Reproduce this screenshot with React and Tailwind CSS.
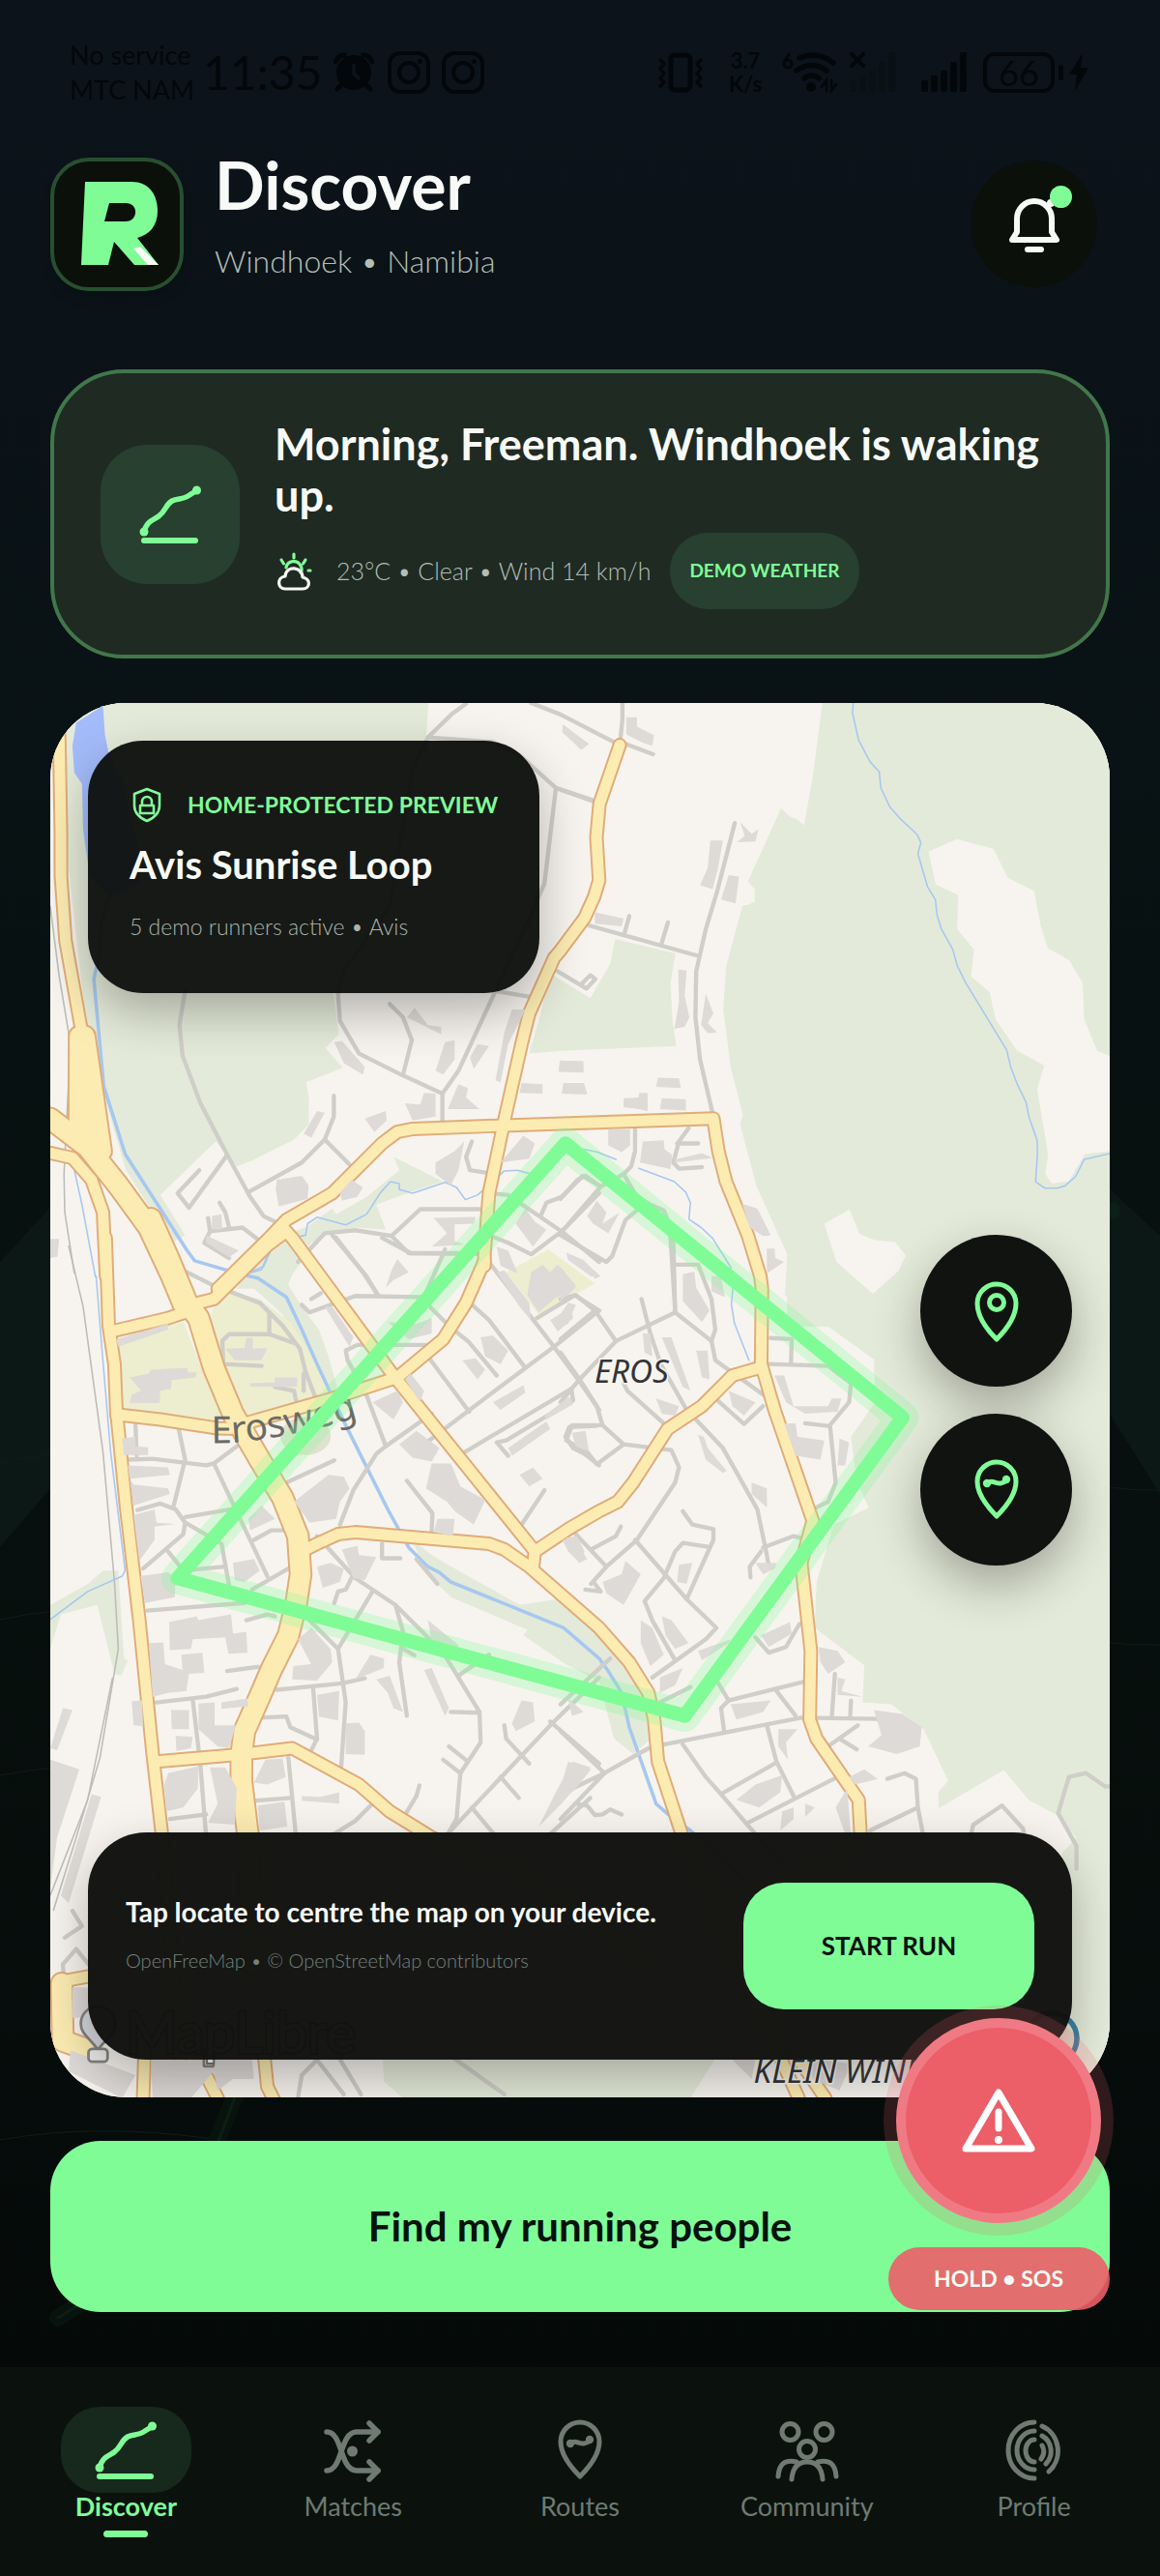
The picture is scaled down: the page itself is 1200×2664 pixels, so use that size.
const tabs = [
  { label: "Discover", icon: RouteLineIcon, active: true },
  { label: "Matches", icon: MatchesIcon },
  { label: "Routes", icon: RoutePinIcon },
  { label: "Community", icon: CommunityIcon },
  { label: "Profile", icon: ProfileIcon },
];

/* ---------- ICONS ---------- */

function RouteLineIcon() {
  return (
    <svg viewBox="0 0 64 64" className="size-16" fill="none" stroke="currentColor" strokeWidth="5.5" strokeLinecap="round">
      <path d="M5 50C8 38 15 38 20 34C28 28 27 22 34 18C40 15 46 17 52 12L60 7" />
      <path d="M5 59H58" strokeWidth="6" />
      <circle cx="5" cy="50" r="4.5" fill="currentColor" stroke="none" />
      <circle cx="59.5" cy="7" r="4.5" fill="currentColor" stroke="none" />
    </svg>
  );
}

function MatchesIcon() {
  return (
    <svg viewBox="0 0 64 64" className="size-16 overflow-visible" fill="none" stroke="currentColor" strokeWidth="5.5" strokeLinecap="round" strokeLinejoin="round">
      <path d="M5 13C22 13 18 53 36 53H58" />
      <path d="M5 53C22 53 18 13 36 13H58" />
      <path d="M49 4L58 13L49 22M49 44L58 53L49 62" />
      <circle cx="31.5" cy="33" r="5.5" fill="currentColor" stroke="none" />
    </svg>
  );
}

function RoutePinIcon() {
  return (
    <svg viewBox="0 0 64 64" className="size-16" fill="none" stroke="currentColor" strokeWidth="5" strokeLinecap="round" strokeLinejoin="round">
      <path d="M32 59C21 48 12 35 12 23A20 20 0 0 1 52 23C52 35 43 48 32 59Z" />
      <path d="M22 25C28 19 34 30 42 22" />
      <circle cx="22" cy="25" r="4.2" fill="currentColor" stroke="none" />
      <circle cx="42" cy="21" r="4.2" fill="currentColor" stroke="none" />
    </svg>
  );
}

function LocateIcon() {
  return (
    <svg viewBox="0 0 64 64" className="size-16" fill="none" stroke="currentColor" strokeWidth="5" strokeLinecap="round" strokeLinejoin="round">
      <path d="M32 61C21 50 12 37 12 24A20 20 0 0 1 52 24C52 37 43 50 32 61Z" />
      <circle cx="32" cy="23" r="7.5" />
    </svg>
  );
}

function CommunityIcon() {
  return (
    <svg viewBox="0 0 64 64" className="size-16 overflow-visible" fill="none" stroke="currentColor" strokeWidth="5" strokeLinecap="round">
      <circle cx="14.5" cy="13" r="8.5" />
      <circle cx="49.5" cy="13" r="8.5" />
      <circle cx="32" cy="31" r="8.5" />
      <path d="M16 62C17 50 22 44 32 44C42 44 47 50 48 62" />
      <path d="M2 59C3 46 9 41 21 44M62 59C61 46 55 41 43 44" />
    </svg>
  );
}

function ProfileIcon() {
  return (
    <svg viewBox="0 0 64 64" className="size-16" fill="none" stroke="currentColor" strokeWidth="5" strokeLinecap="round">
      <path d="M32 3A27 29 0 0 0 32 61M32 12A18 20 0 0 0 32 52M32 21A9 11.5 0 0 0 32 44" />
      <path d="M40 7A27 28 0 0 1 47 54M40 17A17 18 0 0 1 44 46M40 27Q44 34 39 41" />
    </svg>
  );
}

function WeatherIcon() {
  return (
    <svg viewBox="0 0 40 40" className="size-10 shrink-0" fill="none" strokeWidth="3.2" strokeLinecap="round" strokeLinejoin="round">
      <path d="M12 16A8 8 0 0 1 27 14C28.500 17 28 20 27 21M20 2V6M7 8L9.500 12M32 8L29.500 12M35 19H37" stroke="#80fc97" />
      <path d="M11 38H29C37 38 38 28 29 26C29 15 12 13 11 25C2 26 3 38 11 38Z" stroke="#f7faf6" />
    </svg>
  );
}

function ShieldLockIcon() {
  return (
    <svg viewBox="0 0 36 40" className="h-10 w-9 shrink-0 text-[#80fc97]" fill="none" stroke="currentColor" strokeWidth="2.600" strokeLinejoin="round">
      <path d="M18 4L31 9V21C31 29 25 34 18 37C11 34 5 29 5 21V9Z" />
      <path d="M11 21H25V29H11ZM13 21V17A5 5 0 0 1 23 17V21" />
    </svg>
  );
}

function BellIcon() {
  return (
    <svg viewBox="0 0 60 64" className="h-16 w-15" fill="none" stroke="#f7faf6" strokeWidth="6" strokeLinecap="round" strokeLinejoin="round">
      <path d="M12 40V26A18 18 0 0 1 48 26V40L53 48H7Z" />
      <path d="M23 58H37" />
      <circle cx="47" cy="10" r="4" fill="#f7faf6" stroke="none" />
    </svg>
  );
}

function AlertIcon() {
  return (
    <svg viewBox="0 0 80 72" className="h-18 w-20" fill="none" stroke="white" strokeWidth="7" strokeLinecap="round" strokeLinejoin="round">
      <path d="M40 7L74 65H6Z" />
      <path d="M40 27V44" />
      <circle cx="40" cy="56" r="4" fill="white" stroke="none" />
    </svg>
  );
}

function Logo() {
  return (
    <div className="mt-[7px] size-[138px] shrink-0 rounded-[40px] border-4 border-[#284f2f] bg-[#0b100b] shadow-lg">
      <svg viewBox="4 4 130 130" className="size-full" role="img" aria-label="Logo">
        <path
          fillRule="evenodd"
          fill="#80fc97"
          d="M36 25H84C102 25 111 38 111 55C111 71 102 80 90 83L112 111H87L66 87L60 111H32ZM61 47L56 66H78C91 66 92 47 78 47Z"
        />
        <path d="M86 94L93 92L112 111H101Z" fill="#f7faf6" />
      </svg>
    </div>
  );
}

/* ---------- STATUS BAR ---------- */

function GramIcon() {
  return (
    <svg viewBox="0 0 44 44" className="size-11" fill="none" stroke="currentColor" strokeWidth="4">
      <rect x="2" y="2" width="40" height="40" rx="11" />
      <circle cx="22" cy="22" r="10" />
      <circle cx="33.500" cy="10.500" r="2.500" fill="currentColor" stroke="none" />
    </svg>
  );
}

function SignalBars({ className }) {
  return (
    <svg viewBox="0 0 48 42" className={className} fill="currentColor">
      <rect x="0" y="29" width="7" height="12" rx="2" />
      <rect x="10" y="24" width="7" height="17" rx="2" />
      <rect x="20" y="19" width="7" height="22" rx="2" />
      <rect x="30" y="10" width="7" height="31" rx="2" />
      <rect x="40" y="0" width="7" height="41" rx="2" />
    </svg>
  );
}

function StatusBar() {
  return (
    <div className="flex h-[150px] items-center justify-between pr-[74px] pl-[72px] text-[#03070a]">
      <div className="flex items-center">
        <div className="w-[134px] text-[27px] leading-9 whitespace-nowrap">
          <p>No service</p>
          <p>MTC NAM</p>
        </div>
        <p className="mr-3 ml-1 text-[48px] leading-none">11:35</p>
        <svg viewBox="0 0 42 42" className="size-[42px]">
          <circle cx="21" cy="21" r="18" fill="currentColor" />
          <path d="M2 10Q5 3 11 3M40 10Q37 3 31 3M7 35L4 38M35 35L38 38" stroke="currentColor" strokeWidth="5" strokeLinecap="round" fill="none" />
          <path d="M21 12V22L27 28" stroke="#0b131a" strokeWidth="3.500" fill="none" />
        </svg>
        <div className="ml-3.5 flex gap-3">
          <GramIcon />
          <GramIcon />
        </div>
      </div>

      <div className="flex items-center">
        <svg viewBox="0 0 50 42" className="mr-5 h-[42px] w-[50px]" fill="none" stroke="currentColor" strokeWidth="5" strokeLinejoin="round" strokeLinecap="round">
          <rect x="15" y="3" width="20" height="36" rx="4" />
          <path d="M4 8L8 12L4 17L8 22L4 27L8 31L4 35M46 8L42 12L46 17L42 22L46 27L42 31L46 35" strokeWidth="3.500" />
        </svg>
        <div className="mr-4 w-11 text-center text-[22px] leading-6 font-bold">
          <p>3.7</p>
          <p>K/s</p>
        </div>
        <svg viewBox="0 0 58 42" className="mr-3 h-[42px] w-[58px]" fill="none" stroke="currentColor" strokeWidth="5.500" strokeLinecap="round">
          <path d="M18 6Q36 -2 53 11M15 19Q31 8 46 19M23 27Q31 21 38 27" />
          <circle cx="30" cy="36" r="5" fill="currentColor" stroke="none" />
          <path d="M41 36L46 29V40M56 33L51 40V29" strokeWidth="2.500" />
          <path d="M7 2L3 9" strokeWidth="3" />
          <circle cx="6" cy="12" r="4" strokeWidth="3" />
        </svg>
        <div className="relative mr-[26px]">
          <SignalBars className="h-[42px] w-12 text-[#0a1115]" />
          <svg viewBox="0 0 16 16" className="absolute top-0 left-0 size-4" stroke="currentColor" strokeWidth="4" strokeLinecap="round">
            <path d="M2 2L14 14M14 2L2 14" />
          </svg>
        </div>
        <SignalBars className="mr-4 h-[42px] w-12" />
        <div className="flex h-[42px] w-[74px] items-center justify-center rounded-xl border-4 border-current text-[36px] leading-none">
          66
        </div>
        <div className="ml-1 h-4 w-[5px] rounded bg-current" />
        <svg viewBox="0 0 20 40" className="ml-1.5 h-10 w-5" fill="currentColor">
          <path d="M14 0L0 22H8L6 39L20 15H12Z" />
        </svg>
      </div>
    </div>
  );
}

/* ---------- MAP ---------- */

// Geometry is kept per tile; dx/dy place the tile on the sheet.
const tiles = [
  {
    id: "nw",
    dx: 0,
    dy: 0,
    parks: [
      "168,68 1122,68 1115,160 900,500 873,828 887,935 852,970 898,1022 801,1060 809,1100 808,1170 770,1210 660,1265 620,1280 565,1215 420,1355 485,1460 450,1480 330,1290 230,950 180,500",
      "1440,775 1545,840 1597,750 1610,685 1768,723 1755,800 1760,900 1770,965 1467,978 1385,985 1410,900",
      "1030,1255 1160,1320 1080,1345 985,1380 1010,1445 930,1440 850,1455 790,1500 750,1600 620,1600 700,1470 800,1440 870,1390 850,1360 880,1405 960,1360 1045,1290",
    ],
    lakes: ["200,120 270,75 275,150 285,200 320,280 360,440 365,540 290,575 235,520 218,400 215,280 195,250 190,180"],
    rivers: ["290,570 265,640 262,720 246,790 272,1070 328,1248 490,1500 510,1527 630,1562 675,1572"],
    streams: [
      "1390,1300 1355,1290 1320,1292 1250,1355 1218,1367 1195,1335 1165,1322 1080,1350 1045,1340 1045,1325 1022,1320 995,1350 960,1405 905,1433 830,1413 805,1430 800,1460 730,1475 705,1500 685,1550 640,1563",
      "195,1290 215,1380 250,1568",
    ],
    rails: ["132,600 155,780 185,960 168,1300 170,1400 195,1560"],
    minor: [
      "1220,70 1185,95 1120,158 1080,240 1020,600 900,770 885,830 890,900 940,985 1050,1040 1158,1090 1158,1165",
      "1120,158 1290,170 1360,205 1455,290 1560,325",
      "1390,68 1467,98 1610,172",
      "1455,290 1425,540 1390,620 1200,1030 1158,1090",
      "1300,822 1395,838",
      "1020,855 1055,890 1078,950 1055,1040",
      "485,820 470,910 478,990 525,1115 595,1250 655,1360 690,1410 720,1425",
      "655,1345 790,1270 850,1210 874,1150 874,1095",
      "850,1210 915,1275",
      "595,1250 495,1388 465,1350 522,1290",
      "545,1415 550,1450 635,1440 700,1490",
      "550,1450 535,1480 600,1520",
      "575,1375 590,1400 600,1440",
      "1235,1215 1220,1255 1230,1290 1270,1296",
      "870,1460 960,1568 990,1620",
      "780,1530 850,1455 930,1447 1025,1462 1100,1392 1255,1392",
      "1025,1462 1070,1507 1255,1507",
      "1280,1350 1330,1355 1470,1450 1568,1530",
      "1415,1410 1430,1375 1470,1360 1525,1305 1568,1330",
      "1568,1350 1470,1450 1390,1510 1330,1480 1285,1462",
      "1520,805 1545,780 1558,790 1535,815 1460,770",
    ],
    major: [
      "155,130 160,410 160,520 172,690 213,920",
      "132,1245 190,1258 240,1315 270,1400 278,1568",
      "570,1600 700,1472 750,1420 870,1350 1000,1220 1040,1190 1080,1182 1320,1173 1867,1155 1880,1240 1900,1320 1957,1460 1990,1568 1994,1600 1992,1797 2027,1917 2127,2207 2097,2317 2122,2547 2119,2727 2137,2777 2247,2937 2253,3047 2147,3107 1867,3217",
      "1622,178 1569,332 1561,420 1568,532 1555,575 1530,630 1467,715 1450,735 1385,880 1365,960 1320,1160 1280,1350 1268,1510 1268,1540",
    ],
    highway: ["209,940 208,1200", "222,940 265,1240", "132,1155 230,1230 310,1330 390,1440 450,1568 480,1640"],
    blocks: [
      "725,1315 790,1305 808,1330 805,1365 730,1385 722,1340",
      "890,1350 920,1315 950,1335 935,1360 895,1370",
      "955,1155 1010,1135 1012,1160 980,1190",
      "1060,1115 1100,1118 1110,1088 1140,1090 1140,1150 1080,1160",
      "1172,1130 1200,1065 1225,1075 1220,1100 1255,1130",
      "795,1195 830,1135 850,1140 815,1205",
      "555,1410 580,1405 582,1445 555,1445",
      "1140,1270 1190,1240 1215,1215 1200,1290 1180,1330 1140,1300",
      "875,955 895,952 955,1020 950,1040 900,1010",
      "1065,890 1085,865 1120,910 1155,915 1155,935",
      "1165,955 1190,950 1190,1000 1160,1040 1140,1030",
      "1250,960 1280,965 1240,1025 1230,995",
      "1340,870 1375,870 1330,960 1310,1060 1297,1055 1320,930",
      "1465,1003 1525,1005 1527,1032 1462,1032",
      "1475,1062 1530,1065 1535,1092 1470,1090",
      "1365,1062 1420,1065 1420,1090 1360,1088",
      "1475,125 1540,175 1520,190 1475,145",
      "1135,1415 1245,1412 1240,1430 1190,1432 1190,1475 1215,1485 1130,1490 1170,1455",
      "540,1460 625,1500 600,1518 540,1480",
      "132,1470 155,1470 150,1515 132,1520",
      "1310,1270 1370,1200 1400,1220 1385,1260",
      "1350,1430 1375,1390 1400,1425 1430,1445 1395,1490",
      "1300,1490 1330,1500 1355,1560 1310,1540",
    ],
  },
  {
    id: "ne",
    dx: 1467,
    dy: 0,
    parks: [
      "685,68 1440,68 1440,1700 593,1700 593,1510 512,1330 470,1170 477,1145 445,1020 426,870 433,758 476,598 490,596 508,588 508,555 490,535 577,343 600,365 620,372 637,388 660,260",
    ],
    clearings: [
      "963,457 1037,424 1133,450 1170,525 1239,560 1256,650 1275,710 1330,740 1366,800 1370,895 1404,978 1440,993 1440,1240 1372,1248 1330,1318 1285,1325 1268,1300 1276,1250 1247,1078 1266,1016 1195,978 1138,895 1123,825 1074,783 1082,712 1038,660 1040,570 982,543",
      "690,1430 756,1393 783,1458 822,1473 876,1478 903,1513 885,1553 817,1613 722,1530",
    ],
    streams: [
      "60,1235 95,1242 145,1262",
      "205,1285 298,1320 328,1348 340,1375 336,1418 368,1440 398,1468 445,1543 452,1590 447,1640 455,1690 493,1787",
      "766,68 764,95 780,165 810,222 834,248 838,290 862,340 890,372 933,412 943,433 935,462 960,548 981,583 985,622 996,658 1026,712 1038,755 1060,800 1167,975 1178,1020 1195,1065 1218,1112 1226,1152 1247,1212 1248,1245 1243,1320 1267,1337 1300,1337 1320,1331 1348,1306 1370,1262 1440,1246",
    ],
    minor: [
      "162,60 162,110 156,170 242,202",
      "0,295 100,330",
      "456,382 410,560 380,660 355,770 353,890 365,1000 400,1150",
      "75,650 362,730",
      "180,625 168,668",
      "281,642 265,695",
      "195,1180 195,1240 185,1280 165,1300 105,1333 65,1305",
      "360,1220 305,1220",
      "335,1180 310,1215 295,1270 310,1286 370,1282",
      "65,1305 45,1315 0,1365",
      "105,1333 0,1455",
      "165,1300 200,1360 240,1382 270,1395 285,1430 290,1500 300,1660",
      "0,1460 120,1530 135,1515 170,1420 200,1395",
    ],
    blocks: [
      "172,105 200,105 200,130 245,152 240,180 215,172 172,150",
      "392,428 425,428 412,500 398,555 365,545 385,500",
      "470,380 500,410 518,398 510,430 462,432 482,415",
      "440,518 467,522 458,592 420,582",
      "90,615 165,632 160,652 90,645",
      "308,765 330,768 325,835 337,890 325,915 298,920 310,850",
      "380,828 400,880 385,905 410,930 385,932 368,910",
      "0,1005 60,1005 60,1035 0,1033",
      "8,1062 60,1062 70,1090 5,1090",
      "255,1048 310,1050 315,1075 250,1072",
      "165,1102 205,1100 205,1088 228,1088 228,1135 205,1130 165,1125",
      "265,1102 328,1104 328,1134 260,1130",
      "125,1183 182,1183 182,1225 160,1243 125,1225",
      "215,1215 270,1212 272,1235 292,1250 288,1287 208,1270",
      "300,1262 370,1245 398,1258 300,1270",
      "95,1370 120,1400 110,1430 155,1400 125,1455 85,1430 70,1410",
      "475,1378 515,1390 550,1460 530,1462 495,1440",
      "540,1495 560,1495 562,1520 585,1530 540,1560",
      "5,125 75,175 55,190 5,145",
      "15,1505 60,1525 100,1568 80,1568 20,1525",
    ],
  },
  {
    id: "sw",
    dx: 0,
    dy: 1467,
    parks: [
      "780,0 815,30 750,115 790,180 835,240 860,310 885,400 850,440 780,300 740,200 640,110 610,90 700,30",
      "1080,790 1130,830 1200,870 1360,960 1460,945 1568,1040 1680,1130 1700,1180 1717,1300 1657,1350 1607,1310 1568,1160 1480,1115 1370,1040 1380,1025 1180,940 1110,870",
      "132,960 230,905 270,870 310,870 325,1100 335,1105 318,1145 300,1140 255,960 160,985 132,1075",
      "1000,2100 1005,2207 1055,2250 1807,2250 1872,2147 1872,2100",
    ],
    campuses: [
      "560,180 600,140 680,160 760,220 830,330 880,420 740,440 640,470 600,380 545,220",
      "305,265 480,220 545,380 580,460 560,480 318,450",
      "1325,90 1435,30 1557,120 1410,200",
    ],
    rivers: [
      "675,105 750,155 790,240 830,330 905,490 965,610 1015,710 1070,810 1120,860 1150,875 1180,900 1475,1020 1568,1100 1590,1130 1627,1190 1647,1280 1682,1380 1717,1480 1757,1515 1807,1550 1950,1680",
    ],
    streams: ["252,100 268,300 290,560 328,870 320,885 230,925 132,998", "740,5 715,20 690,75 635,98"],
    rails: ["180,20 218,180 270,560 300,900 310,1075 262,1360 200,1568 140,1760", "295,1150 230,1470 132,1720"],
    minor: [
      "480,85 560,125 680,170 740,230 785,290 800,350 825,415",
      "685,335 585,330 582,270 600,252 705,252 705,195",
      "705,252 770,275",
      "795,400 795,355",
      "720,390 770,400 778,440",
      "355,490 358,570",
      "340,580 400,578 540,595 560,590 620,545",
      "468,500 485,580 455,700",
      "560,590 700,885",
      "360,712 420,695 460,710 485,745 580,800 600,910",
      "485,745 480,775 375,865",
      "485,730 605,710",
      "440,820 480,870 590,860",
      "665,790 710,765 740,765",
      "660,920 755,865",
      "385,975 640,955",
      "645,1000 700,985 720,990",
      "595,1133 675,1122",
      "410,1215 540,1200 620,1180",
      "505,1210 525,1380 540,1568",
      "445,1520 540,1508",
      "725,1182 895,1165 955,1152",
      "820,1180 830,1310 800,1370",
      "680,1255 750,1252 760,1280 830,1312",
      "755,1360 775,1568",
      "670,1472 760,1465",
      "810,1000 885,1075 905,1215 893,1385",
      "885,1075 975,925",
      "830,780 930,890 1035,960 1160,1085 1255,1240 1258,1320 1205,1400 1195,1520 1160,1580",
      "875,955 885,925 905,920 920,890",
      "1035,960 1055,1030 1045,1110 1065,1250",
      "1055,1075 1085,1092",
      "1200,1145 1280,1090",
      "1180,1240 1255,1242",
      "1175,1330 1225,1370",
      "1160,1365 1205,1400",
      "1060,1510 1090,1460 1098,1432",
      "860,1568 930,1525 970,1485",
      "880,0 950,90 990,150",
      "815,160 840,145",
      "790,175 810,195 930,152 1100,155 1180,235 1225,270 1300,360",
      "910,320 905,295 935,280 1135,280",
      "910,320 955,400 1010,545",
      "890,750 925,660 985,565 1010,545 1130,460",
      "750,640 875,582",
      "1065,635 1132,720 1130,765",
      "1365,750 1425,660",
      "1120,310 1228,455",
      "1230,170 1280,215 1375,340",
      "1568,190 1450,285 1315,385 1110,540",
      "1285,70 1450,285 1520,380 1568,450",
      "1405,210 1505,150 1568,190",
      "1200,570 1495,395 1500,425 1325,530 1300,535 1330,570",
      "1000,800 1000,838 1048,838",
      "1090,840 1145,905",
      "1000,0 1075,40 1250,42",
      "1110,155 1165,30",
      "1480,520 1490,495 1560,492",
      "1480,520 1500,550 1530,565 1568,595",
      "1568,1150 1445,1270 1180,1550",
      "1440,1265 1568,1375",
      "1310,1410 1358,1465",
      "1235,1490 1300,1568",
      "1320,1275 1325,1310 1385,1375",
      "1430,1568 1545,1465",
      "780,2250 790,2190 830,2150 900,2240",
      "1180,2140 1320,2240",
      "885,2140 945,2240",
      "170,1960 165,1900 200,1860 232,1900",
      "170,1830 215,1800 190,1760",
    ],
    major: [
      "277,0 285,230 300,330 305,450 330,700 365,1000 400,1350 425,1568 480,2250",
      "520,170 560,160 700,20 740,-10",
      "1268,60 1220,170 1160,265 1040,365 870,420 660,480 620,490",
      "305,462 420,475 570,498 650,500",
      "738,-30 765,0 1030,360 1400,820",
      "790,820 830,800 885,775 930,770 1280,800 1320,815 1385,860 1568,1020 1647,1110 1697,1190 1712,1260 1722,1370 1787,1568 1900,1830 2090,2250",
      "1395,860 1400,820 1490,760 1568,715 1617,690 1657,640 1747,500 1837,440 1877,400 1917,360 1987,340",
      "300,243 440,210 500,190",
      "410,1370 640,1350 765,1335 940,1430 1020,1500 1130,1568 1400,1680 1700,1900",
      "375,2250 380,2100",
      "515,2100 530,2170 570,2250",
      "688,2100 700,2220 720,2260",
      "2077,2130 2160,2250",
      "160,1945 240,1930",
    ],
    highway: [
      "395,-50 440,50 490,170 520,210 560,340 610,460 680,580 740,680 780,780 787,880 775,960 755,1040 710,1130 680,1200 640,1290 632,1350 632,1420 650,1568 660,1900",
      "162,1950 165,2100 220,2120",
    ],
    blocks: [
      "340,365 390,355 395,345 490,340 492,352 515,352 512,365 450,372 448,395 420,400 418,432 340,432 345,410 370,400",
      "305,265 440,225 440,240 310,285",
      "590,290 640,288 645,262 662,262 662,290 700,288 685,320 615,320",
      "655,380 720,378 718,365 778,365 778,390 655,390",
      "320,525 355,520 355,545 388,548 388,568 325,568",
      "335,595 440,600 445,620 340,630 350,645 440,655 445,670 350,700",
      "350,725 405,710 410,745 460,748 405,755 405,790 365,845",
      "368,885 440,875 460,890 458,940 380,955",
      "443,1005 515,990 520,1000 605,985 610,1035 645,1030 648,1085 598,1088 590,1045 505,1050 500,1075 445,1078",
      "390,1060 428,1058 432,1115 478,1130 475,1090 530,1085 535,1138 495,1140 488,1185 440,1190 400,1200",
      "520,1218 562,1215 562,1275 618,1275 600,1335 570,1330 520,1285",
      "580,1215 648,1205 650,1225 580,1232",
      "345,1212 372,1210 375,1277 350,1275",
      "448,1235 495,1235 495,1285 450,1285",
      "460,1302 505,1305 500,1335 462,1342",
      "430,1430 440,1400 520,1382 518,1440 480,1490 435,1500",
      "550,1385 590,1385 620,1440 615,1535 545,1530 570,1480",
      "695,1365 740,1362 748,1410 700,1430 665,1425",
      "675,1485 745,1475 752,1540 680,1550",
      "790,1460 840,1462 888,1450 888,1480 790,1472",
      "905,1270 940,1268 955,1290 955,1352 905,1350",
      "830,1195 888,1185 885,1262 835,1252",
      "780,1050 815,1020 865,1075 870,1110 830,1158 765,1155 768,1120 815,1115",
      "970,1090 1005,1100 1005,1125 930,1155",
      "985,1155 1020,1145 1055,1240 1030,1230 1015,1190",
      "1110,1130 1130,1125 1175,1230 1165,1250 1140,1195",
      "1120,1000 1200,1065 1195,1075 1130,1055",
      "1340,1270 1365,1210 1395,1215 1400,1265 1350,1290",
      "770,690 860,620 900,625 915,655 890,690 880,735 810,745 800,730",
      "655,765 650,735 685,700 720,735",
      "610,850 665,840 680,870 640,900 615,895",
      "895,815 935,805 940,830 985,835 955,895 925,890",
      "830,860 865,850 900,865 890,900 845,915",
      "1115,655 1130,590 1180,590 1205,650 1270,685 1240,750 1190,715 1170,690",
      "1135,770 1145,735 1190,735 1185,780",
      "975,430 1040,400 1055,430 1030,475",
      "1045,540 1090,505 1150,550 1130,585 1080,575",
      "1060,370 1075,355 1110,400 1100,430",
      "1290,430 1370,385 1375,405 1310,450",
      "1330,550 1430,480 1440,500 1340,570",
      "1425,465 1490,415 1500,435 1430,475",
      "1360,620 1395,600 1420,630 1385,650",
      "1390,90 1420,70 1440,90 1460,70 1508,125 1450,160 1410,195 1380,150",
      "1010,130 1025,85 1040,55 1070,90 1030,110",
      "1015,220 1090,225 1130,210 1130,250 1070,265",
      "1258,260 1290,255 1330,295 1310,330 1270,310",
      "1210,320 1245,315 1270,345 1250,370",
      "1440,215 1495,180 1500,210 1460,245",
      "1300,90 1320,85 1385,170 1390,215 1360,180",
      "850,180 870,180 925,260 915,285",
      "132,5 155,5 150,50 132,50",
      "165,1230 190,1235 150,1340 132,1335",
      "132,1365 208,1390 150,1568 132,1700",
      "240,1455 265,1462 180,1740 160,1720",
      "395,2150 660,2150 665,2200 610,2200 570,2230 560,2180 500,2250 400,2250",
      "190,1960 232,1960 232,2040 190,2040",
      "185,2125 355,2190 320,2250 180,2180",
      "1480,785 1510,780 1530,820 1515,850",
      "1460,1440 1500,1370 1545,1385 1470,1480 1410,1540",
    ],
  },
  {
    id: "se",
    dx: 1467,
    dy: 1467,
    parks: [
      "593,50 587,150 820,318 823,430 760,520 775,640 807,705 715,750 670,900 665,1020 795,1118 790,1215 865,1220 950,1285 1014,1420 988,1450 990,1492 1160,1392 1225,1470 1300,1510 1350,1568 1310,1611 1337,1680 1337,2260 1440,2260 1440,50",
    ],
    minor: [
      "212,160 235,250 262,330 330,450 425,550 515,710 540,830 545,860",
      "0,265 90,190 145,270 300,195 395,270 405,320 530,410",
      "0,160 40,150 90,190",
      "145,270 50,370 0,430",
      "0,300 50,370 95,440 110,490 165,540 290,555 310,600 300,640 200,790 120,860 80,905",
      "110,490 30,490 15,530 70,560 95,592 165,540",
      "165,380 175,400 270,485",
      "405,420 480,487 530,440",
      "295,0 300,195",
      "300,70 360,70 395,160 405,240 395,270",
      "545,330 700,335 760,380 755,430 705,490 720,640 700,690 660,710",
      "550,262 605,265 603,330",
      "640,485 700,492",
      "320,715 345,750 400,762 400,790 330,945",
      "385,808 320,798 300,820 270,890 220,950 240,1000 300,1105",
      "195,790 330,945 408,1020 380,1050 240,1150",
      "35,770 120,860",
      "80,815 145,780 158,755",
      "530,810 610,780 630,785",
      "525,820 495,860 497,888",
      "510,1045 545,1085 590,1070 625,1010",
      "410,1160 440,1210 640,1160",
      "440,1210 420,1230 428,1290",
      "565,1185 615,1250",
      "0,1455 115,1400 230,1335 270,1325 630,1255 830,1258 880,1315 930,1308",
      "710,1250 718,1140",
      "760,1210 758,1250",
      "540,1275 565,1370 610,1460",
      "320,1325 380,1410 420,1455 580,1640",
      "420,1455 560,1375",
      "490,1530 715,1415",
      "700,1330 778,1275",
      "730,1310 775,1338",
      "855,1415 900,1400 930,1415 935,1490 950,1568",
      "810,1550 935,1490",
      "115,1400 0,1290",
      "115,1400 0,1520",
      "1440,1435 1425,1435 1375,1400 1330,1410 1302,1505 1350,1590 1350,1650",
      "1072,1568 1080,1535 1155,1485 1210,1545 1215,1568",
      "0,1220 130,1100",
      "250,1220 340,1175",
      "40,1480 70,1485 90,1510 110,1508 130,1495 160,1508",
      "65,920 105,925 90,905",
    ],
    blocks: [
      "0,75 40,130 0,165",
      "0,200 20,170 40,175 20,225 0,235",
      "320,95 350,88 355,130 390,190 370,220 320,165",
      "395,100 420,100 430,155 395,140",
      "215,250 235,250 240,310 220,300",
      "265,260 290,260 340,400 320,390",
      "355,295 385,295 390,370 370,365",
      "250,420 310,440 300,465 265,460",
      "440,400 510,430 480,465 450,440",
      "560,360 585,360 610,440 700,440 710,420 735,420 725,455 640,460 590,430",
      "585,485 615,485 620,520 690,530 680,580 615,570",
      "730,525 755,535 745,595 725,595",
      "30,510 65,505 75,560 40,545",
      "360,515 375,520 385,550 435,610 425,615 380,580",
      "500,640 540,655 540,705 500,670",
      "5,790 35,785 70,840 50,850 20,820",
      "110,900 160,880 170,845 210,880 165,960 120,930",
      "310,855 345,850 330,905 305,900",
      "210,1000 240,1020 270,1090 235,1120 210,1060",
      "265,990 290,1000 335,1060 300,1075 275,1040",
      "260,1150 320,1125 300,1170 260,1190",
      "360,1080 445,1050 440,1060 370,1105",
      "525,1040 600,1005 605,1035 545,1070",
      "675,1070 725,1080 745,1110 700,1140 680,1110",
      "725,1150 745,1155 735,1185 790,1200 725,1195",
      "445,1220 550,1210 530,1240 460,1260",
      "570,1285 620,1285 590,1320 595,1365 570,1330",
      "820,1235 895,1245 945,1280 940,1330 880,1350 805,1330 840,1300",
      "510,1430 580,1405 575,1450 520,1490 460,1470",
      "755,1410 795,1390 830,1415 770,1430",
      "580,1500 610,1490 610,1520 575,1550",
      "640,1480 665,1490 640,1515",
      "20,1370 80,1390 40,1440 0,1480 0,1440",
      "60,60 105,100 90,108",
      "510,850 565,850 560,865 530,880",
      "20,1205 60,1240 30,1250",
      "720,1490 750,1440 760,1568 745,1560",
      "640,2145 760,2160 730,2230 660,2200",
      "440,2140 510,2150 500,2200",
    ],
  },
];

function MapLayer({ name, shape: Shape = "polyline", ...style }) {
  return (
    <g {...style}>
      {tiles.map((tile) => (
        <g key={tile.id} transform={`translate(${tile.dx} ${tile.dy})`}>
          {(tile[name] || []).map((points) => (
            <Shape key={points} points={points} />
          ))}
        </g>
      ))}
    </g>
  );
}

function MapCanvas() {
  const route = "1480,1220 2362,1937 1792,2717 465,2357";

  return (
    <svg
      viewBox="132 68 2772 3647"
      preserveAspectRatio="xMidYMid slice"
      className="absolute inset-0 size-full"
      role="img"
      aria-label="Map of Eros, Windhoek"
    >
      <rect x="132" y="68" width="2772" height="3647" fill="#f7f4ef" />
      <MapLayer name="parks" shape="polygon" fill="#e4ead9" />
      <MapLayer name="clearings" shape="polygon" fill="#f7f4ef" />
      <MapLayer name="campuses" shape="polygon" fill="#edeecf" />
      <ellipse cx="800" cy="1985" rx="66" ry="50" fill="#dfe2cd" />
      <MapLayer name="lakes" shape="polygon" fill="#a3bbfa" />
      <MapLayer name="rails" fill="none" stroke="#bcbcba" strokeWidth="4" />

      <g strokeLinejoin="round" strokeLinecap="round" fill="none">
        <MapLayer name="rivers" stroke="#a6c8f0" strokeWidth="9" />
        <MapLayer name="streams" stroke="#a6c8f0" strokeWidth="4" />
        <MapLayer name="minor" stroke="#cfcec9" strokeWidth="11" />
        <MapLayer name="major" stroke="#e0ac7a" strokeWidth="38" />
        <MapLayer name="highway" stroke="#e0ac7a" strokeWidth="62" />
        <MapLayer name="major" stroke="#fcecb2" strokeWidth="28" />
        <MapLayer name="highway" stroke="#fcecb2" strokeWidth="52" />
      </g>
      <MapLayer name="blocks" shape="polygon" fill="#dedad7" />

      {/* place labels */}
      <g className="font-['Noto_Sans',sans-serif]" fill="#333538" stroke="#f7f4ef" strokeWidth="8" paintOrder="stroke">
        <text x="1556" y="1845" fontSize="84" fontStyle="italic">EROS</text>
        <text x="1972" y="3678" fontSize="84" fontStyle="italic">KLEIN WINDHOEK</text>
      </g>
      <path id="erosweg" d="M553 2003Q690 2010 960 1930" fill="none" />
      <text fontSize="98" fill="#6a6a66" className="font-['Noto_Sans',sans-serif]">
        <textPath href="#erosweg">Erosweg</textPath>
      </text>

      {/* attribution marks */}
      <path d="M257 3590C230 3555 212 3548 212 3522A45 45 0 0 1 302 3522C302 3548 284 3555 257 3590Z" fill="#d7d8df" stroke="#85837f" strokeWidth="7" />
      <rect x="232" y="3588" width="50" height="34" rx="10" fill="#ececec" stroke="#85837f" strokeWidth="7" />
      <rect x="534" y="3590" width="25" height="44" rx="4" fill="#ececec" stroke="#85837f" strokeWidth="7" />
      <text x="330" y="3598" fontSize="145" fill="#ffffff" stroke="#777777" strokeWidth="10" paintOrder="stroke">MapLibre</text>
      <circle cx="2752" cy="3561" r="66" fill="#e8ecd9" stroke="#3f83a3" strokeWidth="14" />

      {/* running route */}
      <g fill="none" strokeLinejoin="round" stroke="#80fc97">
        <polygon points={route} strokeWidth="84" strokeOpacity="0.27" />
        <polygon points={route} strokeWidth="37" />
      </g>
    </svg>
  );
}

function MapPanel() {
  return (
    <section className="relative h-[1442px] overflow-hidden rounded-[78px] bg-[#f7f4ef]">
      <MapCanvas />

      <div className="absolute top-[39px] left-[39px] rounded-[57px] bg-[#0e100e]/96 px-[43px] pt-12 pb-[53px] shadow-[0_20px_50px_rgba(0,0,0,0.28)]">
        <div className="flex h-9 items-center gap-6">
          <ShieldLockIcon />
          <p className="text-[23px] font-bold whitespace-nowrap text-[#80fc97]">HOME-PROTECTED PREVIEW</p>
        </div>
        <h2 className="mt-5 text-[40px] leading-12 font-bold text-[#f7faf6]">Avis Sunrise Loop</h2>
        <p className="mt-6 text-[23px] leading-8 font-light text-[#aab5ae]">5 demo runners active • Avis</p>
      </div>

      <div className="absolute top-[550px] right-[39px] flex flex-col gap-7">
        <button type="button" aria-label="Locate me" className="flex size-[157px] items-center justify-center rounded-full bg-[#111310] text-[#80fc97] shadow-[0_20px_50px_rgba(0,0,0,0.3)]">
          <LocateIcon />
        </button>
        <button type="button" aria-label="Show route" className="flex size-[157px] items-center justify-center rounded-full bg-[#111310] text-[#80fc97] shadow-[0_20px_50px_rgba(0,0,0,0.3)]">
          <RoutePinIcon />
        </button>
      </div>

      <div className="absolute inset-x-[39px] bottom-[39px] flex h-[235px] items-center justify-between rounded-[60px] bg-[#0e0f0d]/97 px-[39px] shadow-[0_20px_50px_rgba(0,0,0,0.28)]">
        <div className="pb-6">
          <p className="text-[28px] leading-9 font-bold text-[#f7faf6]">Tap locate to centre the map on your device.</p>
          <p className="mt-4 text-[20px] leading-8 font-light text-[#77827b]">OpenFreeMap • © OpenStreetMap contributors</p>
        </div>
        <button type="button" className="h-[131px] w-[301px] shrink-0 rounded-[42px] bg-[#80fc97] text-[26px] font-bold text-[#07120b]">
          START RUN
        </button>
      </div>
    </section>
  );
}

/* ---------- PAGE ---------- */

function Backdrop() {
  return (
    <svg viewBox="0 0 1200 2664" preserveAspectRatio="none" className="absolute inset-0 size-full" fill="none">
      <path d="M0 1305L60 1240V1530L0 1600ZM1140 1222L1200 1278V1545L1140 1450Z" fill="#0c1815" />
      <path d="M0 1514Q30 1505 60 1504M0 1675Q30 1668 60 1666M0 1836Q30 1830 60 1828M1140 1537Q1170 1542 1200 1541M1140 1698Q1170 1702 1200 1701M0 2213Q100 2195 220 2212" stroke="#101c18" strokeWidth="1" />
      <path d="M250 2150L220 2225M60 2397L90 2378" stroke="#07130d" strokeWidth="18" strokeLinecap="round" />
      <path d="M250 2150L222 2225M60 2397L90 2378" stroke="#0e1e15" strokeWidth="3" strokeLinecap="round" />
      <circle cx="1150" cy="1252" r="9" fill="#0d2018" />
    </svg>
  );
}

export default function App() {
  return (
    <div className="relative flex min-h-screen flex-col bg-linear-to-b from-[#0c131b] via-[#07110f] to-[#050908] font-['Lato','Noto_Sans',sans-serif]">
      <Backdrop />

      <div className="relative flex flex-col">
        <StatusBar />

        {/* HEADER */}
        <header className="flex items-start px-[52px] pt-1.5">
          <Logo />
          <div className="ml-8 flex-1">
            <h1 className="text-[68px] leading-[70px] font-bold text-[#f7faf6]">Discover</h1>
            <p className="mt-6 text-[32px] leading-10 font-light text-[#b3beb6]">Windhoek • Namibia</p>
          </div>
          <button type="button" aria-label="Notifications" className="relative mt-2.5 mr-[13px] flex size-[131px] items-center justify-center rounded-full bg-[#0b100b]">
            <BellIcon />
            <span className="absolute top-[26px] right-[26px] size-[23px] rounded-full bg-[#80fc97]" />
          </button>
        </header>

        <main className="mt-[81px] flex flex-col px-[52px]">
          {/* GREETING + WEATHER */}
          <section className="flex min-h-[299px] items-center gap-9 rounded-[76px] border-4 border-[#41774b] bg-[#1f2a23] px-12">
            <div className="flex size-36 shrink-0 items-center justify-center rounded-[48px] bg-[#28402f] text-[#80fc97]">
              <RouteLineIcon />
            </div>
            <div>
              <h2 className="text-[45px] leading-[53px] font-bold text-[#f7faf6]">
                Morning, Freeman. Windhoek is waking up.
              </h2>
              <div className="mt-3 flex items-center">
                <WeatherIcon />
                <p className="ml-6 text-[25px] font-light text-[#b3beb6]">23°C • Clear • Wind 14 km/h</p>
                <span className="ml-5 flex h-[79px] items-center rounded-[39px] bg-[#28402f] px-5 text-[19px] font-bold text-[#80fc97]">
                  DEMO WEATHER
                </span>
              </div>
            </div>
          </section>

          {/* MAP, CALL TO ACTION, SOS */}
          <div className="relative mt-[46px]">
            <MapPanel />
            <button type="button" className="mt-[45px] h-[177px] w-full rounded-[52px] bg-[#80fc97] text-[42px] font-bold text-[#07120b]">
              Find my running people
            </button>

            <div className="absolute -right-1 bottom-0.5 flex flex-col items-center gap-3">
              <button type="button" aria-label="SOS" className="rounded-full bg-[#ec5e68]/18 p-[13px]">
                <span className="flex size-[212px] items-center justify-center rounded-full border-[10px] border-[#f07a84] bg-[#ec5e68]">
                  <AlertIcon />
                </span>
              </button>
              <p className="flex h-[65px] w-[229px] items-center justify-center rounded-full bg-[#ec5e68]/90 text-[23px] font-bold text-[#f7faf6]">
                HOLD • SOS
              </p>
            </div>
          </div>
        </main>
      </div>

      {/* TAB BAR */}
      <nav className="relative mt-auto grid h-[216px] grid-cols-5 bg-[#0b120e] px-[13px] pt-[41px]">
        {tabs.map(({ label, icon: Icon, active }) => (
          <a
            key={label}
            href={`#${label.toLowerCase()}`}
            className={active ? "flex flex-col items-center text-[#80fc97]" : "flex flex-col items-center text-[#6e7a72]"}
          >
            <span
              className={
                active
                  ? "flex h-[89px] w-[135px] items-center justify-center rounded-[40px] bg-[#17281d]"
                  : "flex h-[89px] w-[135px] items-center justify-center"
              }
            >
              <Icon />
            </span>
            <span className={active ? "text-[27px] leading-7 font-bold" : "text-[27px] leading-7"}>{label}</span>
            {active && <span className="mt-[11px] h-[7px] w-[46px] rounded-full bg-[#80fc97]" />}
          </a>
        ))}
      </nav>
    </div>
  );
}
